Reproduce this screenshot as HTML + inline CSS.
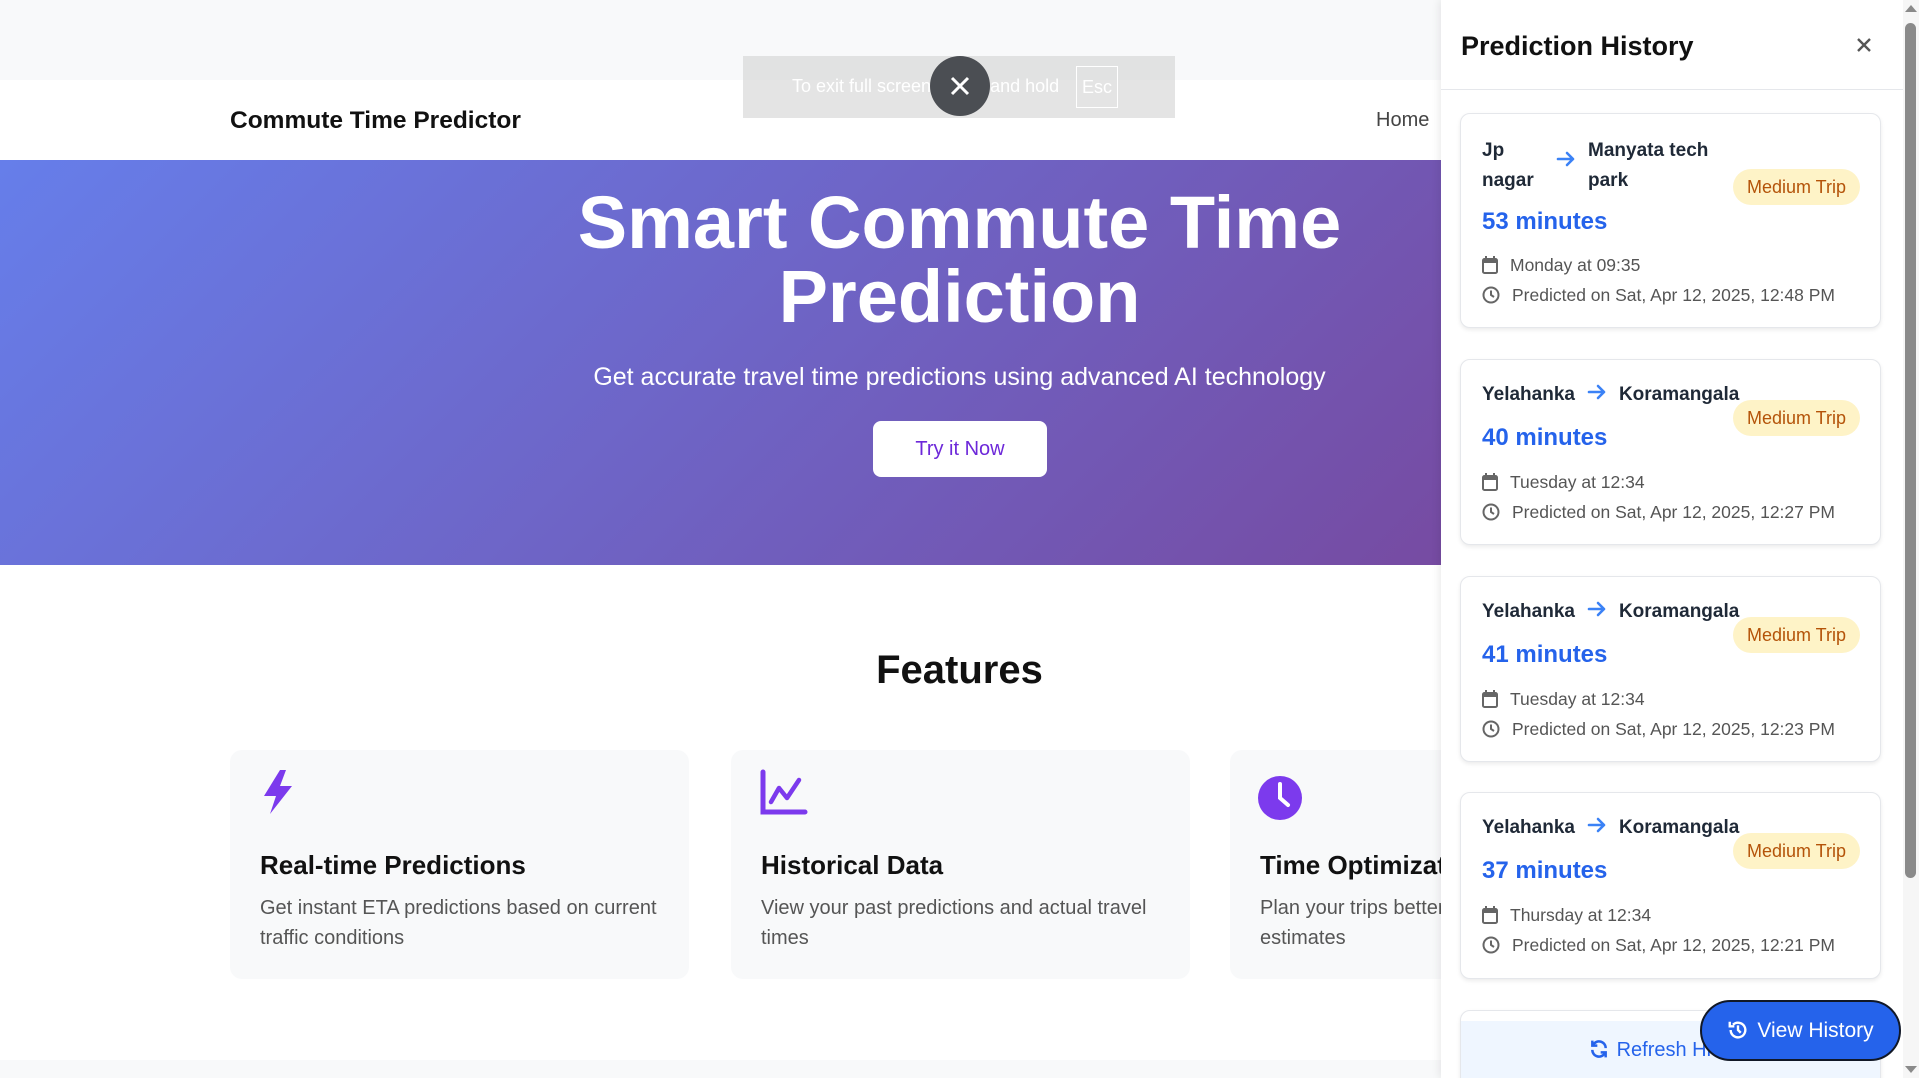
<!DOCTYPE html>
<html><head><meta charset="utf-8"><style>
*{box-sizing:border-box;margin:0;padding:0}
body{width:1919px;height:1078px;overflow:hidden;font-family:"Liberation Sans",sans-serif;background:#fff;position:relative}
.abs{position:absolute}
.top{left:0;top:0;width:1441px;height:80px;background:#f8f9fa}
.nav{left:0;top:80px;width:1441px;height:80px;background:#fff}
.brand{left:230px;top:107px;font-size:24.5px;font-weight:bold;color:#111}
.home{left:1376px;top:109px;font-size:20px;color:#444}
.hero{left:0;top:160px;width:1441px;height:405px;background:linear-gradient(135deg,#667eea,#764ba2);color:#fff;text-align:center}
.hero h1{position:absolute;left:0;width:1919px;top:26px;font-size:74px;line-height:74px;font-weight:bold}
.hero p{position:absolute;left:0;width:1919px;top:203px;font-size:25px}
.btn{left:873px;top:421px;width:174px;height:56px;background:#fff;border-radius:8px;color:#6d28d9;font-size:20px;line-height:56px;text-align:center}
.feat{left:0;width:1919px;top:648px;text-align:center;font-size:40px;font-weight:bold;color:#111}
.card{top:750px;width:459px;height:229px;background:#f8f9fa;border-radius:12px;overflow:hidden}
.card svg{position:absolute;left:28px;top:18px}
.card h3{position:absolute;left:30px;top:100px;font-size:26px;font-weight:600;color:#111;white-space:nowrap}
.card p{position:absolute;left:30px;top:143px;width:410px;font-size:20px;line-height:30px;color:#555}
.bot{left:0;top:1060px;width:1441px;height:18px;background:#f8f9fa}
.fs{left:743px;top:56px;width:432px;height:62px;background:rgba(210,210,210,.6);color:#fff;font-size:18px}
.panel{left:1441px;top:0;width:462px;height:1078px;background:#fff;box-shadow:-2px 0 8px rgba(0,0,0,.08);overflow:hidden}
.ph{left:0;top:0;width:462px;height:90px;border-bottom:1px solid #e5e7eb}
.ph b{position:absolute;left:20px;top:31px;font-size:27px;color:#111}
.hc{top:113px;left:19px;width:421px;background:#fff;border:1px solid #e5e7eb;border-radius:10px;box-shadow:0 2px 4px rgba(0,0,0,.08)}
.rt{position:absolute;left:21px;font-size:19px;font-weight:600;color:#1f2937;white-space:nowrap}
.min{position:absolute;left:21px;font-size:24px;font-weight:bold;color:#2563eb}
.badge{position:absolute;left:272px;width:127px;height:36px;border-radius:18px;background:#fef3c7;color:#b45309;font-size:18px;line-height:36px;text-align:center}
.meta{position:absolute;left:21px;font-size:17.5px;color:#555;white-space:nowrap}
.meta svg{vertical-align:-3px;margin-right:12px}
.arr{display:inline-block;vertical-align:-1px;margin:0 12px}
</style></head><body>
<div class="abs top"></div>
<div class="abs nav"></div>
<div class="abs brand">Commute Time Predictor</div>
<div class="abs home">Home</div>
<div class="abs hero">
<h1>Smart Commute Time<br>Prediction</h1>
<p>Get accurate travel time predictions using advanced AI technology</p>
</div>
<div class="abs btn">Try it Now</div>
<div class="abs feat">Features</div>
<div class="abs card" style="left:230px"><svg width="40" height="50" viewBox="0 0 40 50"><path d="M22 2 L6 28 H18 L12 46 L34 18 H22 L28 2 Z" fill="#7c3aed"/></svg><h3>Real-time Predictions</h3><p>Get instant ETA predictions based on current traffic conditions</p></div>
<div class="abs card" style="left:731px"><svg width="50" height="50" viewBox="0 0 50 50"><path d="M4 4 V44 H46" fill="none" stroke="#7c3aed" stroke-width="5" stroke-linecap="round"/><path d="M12 34 L20 20 L28 30 L40 12" fill="none" stroke="#7c3aed" stroke-width="4.5" stroke-linecap="round" stroke-linejoin="round"/></svg><h3>Historical Data</h3><p>View your past predictions and actual travel times</p></div>
<div class="abs card" style="left:1230px;width:211px;border-radius:12px 0 0 12px"><svg width="50" height="52" viewBox="0 0 50 52"><circle cx="22" cy="30" r="22" fill="#7c3aed"/><path d="M22 16 V30 L30 37" fill="none" stroke="#fff" stroke-width="4" stroke-linecap="round"/></svg><h3>Time Optimization</h3><p style="width:360px">Plan your trips better with accurate time estimates</p></div>
<div class="abs bot"></div>
<div class="abs fs"><span style="position:absolute;left:49px;top:20px">To exit full screen, press and hold</span><span style="position:absolute;left:333px;top:10px;width:42px;height:42px;border:1px solid #fff;text-align:center;line-height:40px">Esc</span><div style="position:absolute;left:187px;top:0;width:60px;height:60px;border-radius:50%;background:#4b4e53"><svg width="60" height="60"><path d="M22 22 L38 38 M38 22 L22 38" stroke="#fff" stroke-width="3"/></svg></div></div>

<div class="abs panel">
<div class="abs ph"><b>Prediction History</b><svg style="position:absolute;left:416px;top:38px" width="14" height="14"><path d="M1 1L13 13M13 1L1 13" stroke="#555" stroke-width="2.4"/></svg></div>

<div class="abs hc" style="top:113px;height:215px">
<div class="rt" style="top:22px;line-height:30px">Jp<br>nagar</div>
<div class="rt" style="left:95px;top:36px"><svg width="20" height="18" viewBox="0 0 20 18"><path d="M2 9H17M11 3L17 9L11 15" fill="none" stroke="#3b82f6" stroke-width="2.6" stroke-linecap="round" stroke-linejoin="round"/></svg></div>
<div class="rt" style="left:127px;top:22px;line-height:30px">Manyata tech<br>park</div>
<div class="badge" style="top:55px">Medium Trip</div>
<div class="min" style="top:94px">53 minutes</div>
<div class="meta" style="top:141px"><svg width="16" height="18" viewBox="0 0 16 18"><rect x="1" y="3" width="14" height="14" rx="1.5" fill="none" stroke="#666" stroke-width="2"/><rect x="1" y="3" width="14" height="4" fill="#666"/><path d="M4 0V4M12 0V4" stroke="#666" stroke-width="2"/></svg>Monday at 09:35</div>
<div class="meta" style="top:171px"><svg width="18" height="18" viewBox="0 0 18 18"><circle cx="9" cy="9" r="7.5" fill="none" stroke="#666" stroke-width="2"/><path d="M9 4.5V9L12 11" fill="none" stroke="#666" stroke-width="2"/></svg>Predicted on Sat, Apr 12, 2025, 12:48 PM</div>
</div>

<div class="abs hc" style="top:359px;height:186px">
<div class="rt" style="top:23px">Yelahanka<svg class="arr" width="20" height="18" viewBox="0 0 20 18"><path d="M2 9H17M11 3L17 9L11 15" fill="none" stroke="#3b82f6" stroke-width="2.6" stroke-linecap="round" stroke-linejoin="round"/></svg>Koramangala</div>
<div class="badge" style="top:40px">Medium Trip</div>
<div class="min" style="top:64px">40 minutes</div>
<div class="meta" style="top:112px"><svg width="16" height="18" viewBox="0 0 16 18"><rect x="1" y="3" width="14" height="14" rx="1.5" fill="none" stroke="#666" stroke-width="2"/><rect x="1" y="3" width="14" height="4" fill="#666"/><path d="M4 0V4M12 0V4" stroke="#666" stroke-width="2"/></svg>Tuesday at 12:34</div>
<div class="meta" style="top:142px"><svg width="18" height="18" viewBox="0 0 18 18"><circle cx="9" cy="9" r="7.5" fill="none" stroke="#666" stroke-width="2"/><path d="M9 4.5V9L12 11" fill="none" stroke="#666" stroke-width="2"/></svg>Predicted on Sat, Apr 12, 2025, 12:27 PM</div>
</div>

<div class="abs hc" style="top:576px;height:186px">
<div class="rt" style="top:23px">Yelahanka<svg class="arr" width="20" height="18" viewBox="0 0 20 18"><path d="M2 9H17M11 3L17 9L11 15" fill="none" stroke="#3b82f6" stroke-width="2.6" stroke-linecap="round" stroke-linejoin="round"/></svg>Koramangala</div>
<div class="badge" style="top:40px">Medium Trip</div>
<div class="min" style="top:64px">41 minutes</div>
<div class="meta" style="top:112px"><svg width="16" height="18" viewBox="0 0 16 18"><rect x="1" y="3" width="14" height="14" rx="1.5" fill="none" stroke="#666" stroke-width="2"/><rect x="1" y="3" width="14" height="4" fill="#666"/><path d="M4 0V4M12 0V4" stroke="#666" stroke-width="2"/></svg>Tuesday at 12:34</div>
<div class="meta" style="top:142px"><svg width="18" height="18" viewBox="0 0 18 18"><circle cx="9" cy="9" r="7.5" fill="none" stroke="#666" stroke-width="2"/><path d="M9 4.5V9L12 11" fill="none" stroke="#666" stroke-width="2"/></svg>Predicted on Sat, Apr 12, 2025, 12:23 PM</div>
</div>

<div class="abs hc" style="top:792px;height:187px">
<div class="rt" style="top:23px">Yelahanka<svg class="arr" width="20" height="18" viewBox="0 0 20 18"><path d="M2 9H17M11 3L17 9L11 15" fill="none" stroke="#3b82f6" stroke-width="2.6" stroke-linecap="round" stroke-linejoin="round"/></svg>Koramangala</div>
<div class="badge" style="top:40px">Medium Trip</div>
<div class="min" style="top:64px">37 minutes</div>
<div class="meta" style="top:112px"><svg width="16" height="18" viewBox="0 0 16 18"><rect x="1" y="3" width="14" height="14" rx="1.5" fill="none" stroke="#666" stroke-width="2"/><rect x="1" y="3" width="14" height="4" fill="#666"/><path d="M4 0V4M12 0V4" stroke="#666" stroke-width="2"/></svg>Thursday at 12:34</div>
<div class="meta" style="top:142px"><svg width="18" height="18" viewBox="0 0 18 18"><circle cx="9" cy="9" r="7.5" fill="none" stroke="#666" stroke-width="2"/><path d="M9 4.5V9L12 11" fill="none" stroke="#666" stroke-width="2"/></svg>Predicted on Sat, Apr 12, 2025, 12:21 PM</div>
</div>

<div class="abs hc" style="top:1010px;height:90px;overflow:hidden"><div style="position:absolute;left:0;top:10px;width:421px;height:80px;background:#eff6ff;color:#2563eb;font-size:20px;text-align:center;padding-top:18px"><svg width="20" height="20" viewBox="0 0 24 24" style="vertical-align:-3px;margin-right:8px"><path d="M20 11A8 8 0 0 0 5 7M4 13a8 8 0 0 0 15 4" fill="none" stroke="#2563eb" stroke-width="3"/><path d="M4 2v6h6M20 22v-6h-6" fill="none" stroke="#2563eb" stroke-width="3"/></svg>Refresh History</div></div>
</div>

<div class="abs" style="left:1903px;top:0;width:16px;height:1078px;background:#f6f6f6"></div>
<div class="abs" style="left:1905px;top:23px;width:11px;height:855px;background:#8a8a8a;border-radius:6px"></div>
<div class="abs" style="left:1905px;top:5px;width:0;height:0;border-left:6px solid transparent;border-right:6px solid transparent;border-bottom:7px solid #8a8a8a"></div>
<div class="abs" style="left:1905px;top:1066px;width:0;height:0;border-left:6px solid transparent;border-right:6px solid transparent;border-top:7px solid #8a8a8a"></div>

<div class="abs" style="left:1700px;top:1000px;width:201px;height:61px;background:#2563eb;border:2px solid #111827;border-radius:31px;color:#fff;font-size:21px;line-height:57px;text-align:center"><svg width="22" height="22" viewBox="0 0 24 24" style="vertical-align:-4px;margin-right:8px"><path d="M4 12a8 8 0 1 0 2.5-5.8" fill="none" stroke="#fff" stroke-width="2.6"/><path d="M3 3v5h5" fill="none" stroke="#fff" stroke-width="2.6"/><path d="M12 7v5l3 3" fill="none" stroke="#fff" stroke-width="2.6"/></svg>View History</div>
</body></html>
